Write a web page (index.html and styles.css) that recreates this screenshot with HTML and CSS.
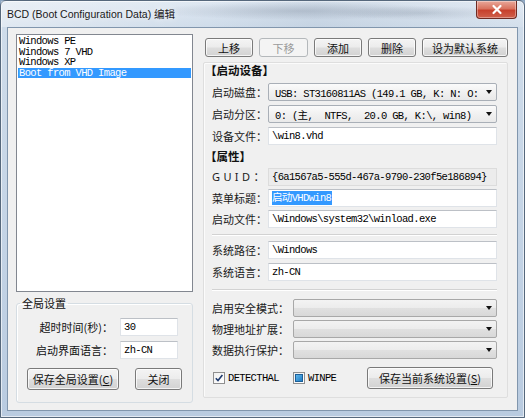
FILE: index.html
```html
<!DOCTYPE html>
<html lang="zh-CN">
<head>
<meta charset="utf-8">
<title>BCD 编辑</title>
<link rel="stylesheet" href="styles.css">
</head>
<body>
<div class="window">
  <div class="titlebar">
    <span class="title">BCD (Boot Configuration Data) 编辑</span>
    <div class="close">
      <svg width="14" height="11" viewBox="0 0 14 11"><path d="M3.5 2 L10.5 9 M10.5 2 L3.5 9" stroke="#fff" stroke-width="2.2" stroke-linecap="round"/></svg>
    </div>
  </div>
  <div class="client">
    <div class="left">
      <div class="entries">
        <div class="entry mono">Windows PE</div>
        <div class="entry mono">Windows 7 VHD</div>
        <div class="entry mono">Windows XP</div>
        <div class="entry mono sel">Boot from VHD Image</div>
      </div>
      <fieldset class="global">
        <legend>全局设置</legend>
        <div class="grow"><span class="glabel">超时时间(秒)：</span><span class="edit mono">30</span></div>
        <div class="grow"><span class="glabel">启动界面语言：</span><span class="edit mono">zh-CN</span></div>
        <div class="gbtns">
          <span class="btn save-global">保存全局设置(<u>C</u>)</span>
          <span class="btn close-btn">关闭</span>
        </div>
      </fieldset>
    </div>
    <div class="right">
      <div class="toolbar">
        <span class="btn b-up">上移</span>
        <span class="btn b-down disabled">下移</span>
        <span class="btn b-add">添加</span>
        <span class="btn b-del">删除</span>
        <span class="btn b-default">设为默认系统</span>
      </div>
      <div class="panel">
        <div class="section">【启动设备】</div>
        <div class="rows rows-device">
          <div class="row"><span class="label">启动磁盘：</span><span class="combo"><span class="mono">USB: ST3160811AS (149.1 GB, K: N: O:</span><i class="arrow"></i></span></div>
          <div class="row"><span class="label">启动分区：</span><span class="combo"><span class="mono">0: (主,  NTFS,  20.0 GB, K:\, win8)</span><i class="arrow"></i></span></div>
          <div class="row"><span class="label">设备文件：</span><span class="edit mono">\win8.vhd</span></div>
        </div>
        <div class="section sec-props">【属性】</div>
        <div class="rows rows-props">
          <div class="row"><span class="label guid">GUID：</span><span class="edit readonly mono">{6a1567a5-555d-467a-9790-230f5e186894}</span></div>
          <div class="row"><span class="label">菜单标题：</span><span class="edit mono"><span class="hl">启动VHDwin8</span></span></div>
          <div class="row"><span class="label">启动文件：</span><span class="edit mono">\Windows\system32\winload.exe</span></div>
        </div>
        <div class="sep"></div>
        <div class="rows rows-sys">
          <div class="row"><span class="label">系统路径：</span><span class="edit mono">\Windows</span></div>
          <div class="row"><span class="label">系统语言：</span><span class="edit mono">zh-CN</span></div>
        </div>
        <div class="sep sep2"></div>
        <div class="rows rows-opts">
          <div class="row wide"><span class="label">启用安全模式：</span><span class="combo gray"><i class="arrow"></i></span></div>
          <div class="row wide"><span class="label">物理地址扩展：</span><span class="combo gray"><i class="arrow"></i></span></div>
          <div class="row wide"><span class="label">数据执行保护：</span><span class="combo gray"><i class="arrow"></i></span></div>
        </div>
        <div class="bottom">
          <span class="check-item c1"><span class="cb checked"><svg width="10" height="10" viewBox="0 0 10 10"><path d="M1.8 5.2 L4 7.6 L8.4 2" fill="none" stroke="#1e3a6e" stroke-width="1.6"/></svg></span><span class="mono">DETECTHAL</span></span>
          <span class="check-item c2"><span class="cb mixed"><span class="fill"></span></span><span class="mono">WINPE</span></span>
          <span class="btn save-sys">保存当前系统设置(<u>S</u>)</span>
        </div>
      </div>
    </div>
  </div>
</div>
</body>
</html>
```

FILE: styles.css
```css
* { box-sizing: border-box; margin: 0; padding: 0; }

html, body { width: 525px; height: 418px; overflow: hidden; }

body {
  font-family: "Noto Sans CJK SC", "Noto Sans", sans-serif;
  font-size: 11px;
  color: #111;
  background: #8ea7c2;
}

.mono {
  font-family: "Liberation Mono", "Noto Sans CJK SC", monospace;
  font-size: 10.5px;
  letter-spacing: -0.65px;
  white-space: pre;
  color: #000;
}

/* window frame */
.window {
  width: 525px;
  height: 418px;
  display: flex;
  flex-direction: column;
  border: 1px solid #56687c;
  border-radius: 6px 6px 0 0;
  padding: 0 6px 6px;
  background: linear-gradient(180deg, #dfe8f2 0%, #cfdcea 26px, #c3d3e5 60%, #b9cbe0 100%);
  box-shadow: inset 0 0 0 1px rgba(255, 255, 255, 0.6);
}

/* glass caption: soft, out-of-focus desktop showing through on the right */
.titlebar {
  height: 26px;
  display: flex;
  align-items: flex-start;
  background:
    radial-gradient(ellipse 150px 9px at 300px 10px, rgba(70, 85, 105, 0.22), transparent),
    radial-gradient(ellipse 90px 7px at 420px 12px, rgba(70, 85, 105, 0.16), transparent),
    linear-gradient(90deg, rgba(255,255,255,0.35) 0%, rgba(255,255,255,0) 40%, rgba(140,160,185,0.15) 60%, rgba(255,255,255,0.1) 100%);
  margin: 0 -6px;
  padding: 0 7px 0 6px;
}

.title {
  font-family: "Liberation Sans", "Noto Sans CJK SC", sans-serif;
  font-size: 10.5px;
  line-height: 16px;
  padding-top: 5px;
  color: #1a1a1a;
  text-shadow: 0 0 6px rgba(255,255,255,0.9);
}

.close {
  margin-left: auto;
  width: 41px;
  height: 18px;
  border: 1px solid #6e2a22;
  border-top: none;
  border-radius: 0 0 4px 4px;
  background: linear-gradient(180deg, #e9a89a 0%, #d9735f 45%, #c7402c 55%, #d0614c 100%);
  box-shadow: inset 0 0 0 1px rgba(255,255,255,0.35);
  display: flex;
  align-items: center;
  justify-content: center;
}

/* client area */
.client {
  flex: 1;
  display: flex;
  gap: 10px;
  padding: 6px 9px 0 8px;
  background: #f0f0f0;
  border: 1px solid #8196ad;
}

.left {
  width: 177px;
  display: flex;
  flex-direction: column;
}

.entries {
  height: 258px;
  background: #fff;
  border: 1px solid #828790;
  padding: 1px;
}

.entry {
  line-height: 10.5px;
  height: 10.5px;
  padding-left: 1px;
}

.entry.sel {
  background: #3399ff;
  color: #fff;
}

/* global settings group */
.global {
  margin-top: 5px;
  border: 1px solid #d5dde3;
  border-radius: 3px;
  padding: 0 0 12px 3px;
  box-shadow: inset 1px 1px 0 #fff;
}

.global legend {
  padding: 0 2px;
  line-height: 12px;
  font-size: 11px;
}

.grow {
  display: grid;
  grid-template-columns: 93px 58px;
  gap: 7px;
  height: 18px;
  margin-top: 5px;
}

.grow:first-of-type { margin-top: 9px; }

.glabel {
  text-align: right;
  line-height: 18px;
}

.gbtns {
  display: flex;
  gap: 16px;
  margin: 9px 0 0 7px;
}

/* buttons */
.btn {
  display: flex;
  align-items: center;
  justify-content: center;
  height: 22px;
  border: 1px solid #7a7a7a;
  border-radius: 3px;
  background: linear-gradient(180deg, #f4f4f4 0%, #ececec 48%, #dedede 52%, #d2d2d2 100%);
  box-shadow: inset 0 0 0 1px rgba(255,255,255,0.75);
  color: #111;
  font-size: 11px;
}

.btn u { text-decoration: underline; text-underline-offset: 1px; }

.save-global { width: 92px; }
.close-btn { width: 47px; }

.right {
  width: 305px;
  display: flex;
  flex-direction: column;
}

.toolbar {
  display: flex;
  gap: 6px;
  margin-top: 4px;
  padding-left: 2px;
}

.toolbar .btn { height: 19px; }
.b-up { width: 48px; }
.b-down { width: 49px; }
.b-add { width: 48px; }
.b-del { width: 48px; }
.b-default { width: 86px; }

.btn.disabled {
  border-color: #b4b8bb;
  background: #f4f4f4;
  color: #9a9a9a;
  box-shadow: none;
}

/* settings panel */
.panel {
  margin-top: 5px;
  height: 336px;
  border: 1px solid #dedede;
  border-radius: 2px;
  box-shadow: inset 1px 1px 0 #fbfbfb;
  padding: 0 10px 0 8px;
}

.section {
  font-weight: bold;
  font-size: 11.5px;
  line-height: 12px;
  height: 12px;
  margin: 1px 0 0 -7px;
  color: #111;
}

.sec-props { margin-top: 5px; }

.rows {
  display: flex;
  flex-direction: column;
  gap: 4px;
}

.rows-device { margin-top: 7px; }
.rows-props { margin-top: 6px; gap: 3px; }
.rows-sys { margin-top: 5px; }
.rows-opts { margin-top: 8px; gap: 4px; }

.row {
  display: grid;
  grid-template-columns: 56px 1fr;
  height: 18px;
}

.row.wide {
  grid-template-columns: 81px 1fr;
  height: 17px;
}

.label {
  line-height: 18px;
  white-space: nowrap;
  color: #1a1a1a;
}

.label.guid {
  letter-spacing: 3.4px;
  font-family: "Noto Sans", "Noto Sans CJK SC", sans-serif;
  font-size: 11px;
}

.edit {
  background: #fff;
  border: 1px solid #dfe3e8;
  border-top-color: #bcc0c6;
  padding-left: 3px;
  line-height: 16px;
  overflow: hidden;
}

.edit.readonly {
  background: #ececec;
  border-color: #dcdcdc;
}

.hl {
  background: #3399ff;
  color: #fff;
  display: inline-block;
  line-height: 14px;
  padding-right: 1px;
}

.combo {
  position: relative;
  border: 1px solid #a9afb7;
  border-radius: 2px;
  background: linear-gradient(180deg, #fbfbfb 0%, #f1f1f1 50%, #e9e9e9 100%);
  padding-left: 6px;
  line-height: 16px;
  overflow: hidden;
}

.combo.gray {
  border-color: #a8a8a8;
  background: linear-gradient(180deg, #f3f3f3 0%, #ececec 50%, #e0e0e0 52%, #d8d8d8 100%);
}

.arrow {
  position: absolute;
  right: 4px;
  top: 6px;
  width: 0;
  height: 0;
  border-left: 3.5px solid transparent;
  border-right: 3.5px solid transparent;
  border-top: 4px solid #111;
}

.sep {
  height: 2px;
  margin-top: 6px;
  border-top: 1px solid #d2d2d2;
  border-bottom: 1px solid #fff;
}

.sep2 { margin-top: 8px; }

.bottom {
  display: flex;
  align-items: center;
  margin-top: 9px;
  height: 22px;
}

.check-item {
  display: flex;
  align-items: center;
  gap: 3px;
}

.c1 { width: 81px; padding-left: 1px; }
.c2 { width: 74px; }

.cb {
  width: 12px;
  height: 12px;
  border: 1px solid #8f8f8f;
  background: linear-gradient(135deg, #f0f0f0, #ffffff);
  display: flex;
  align-items: center;
  justify-content: center;
}

.cb.mixed .fill {
  width: 8px;
  height: 8px;
  background: linear-gradient(135deg, #5fb6ea, #1f7cc4);
  border: 1px solid #1c5f98;
}

.save-sys { width: 126px; }
```
